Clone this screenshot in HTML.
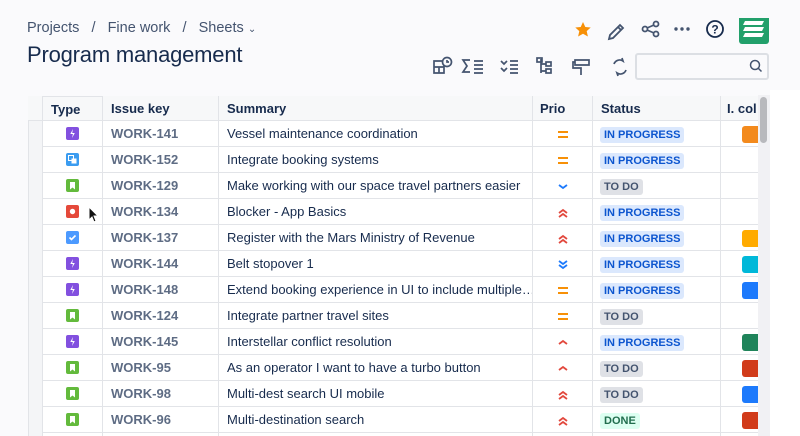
<!DOCTYPE html><html style="overflow:hidden"><head><style>
*{box-sizing:border-box;margin:0;padding:0}
html,body{width:800px;height:436px;overflow:hidden}
body{background:#fafafc;font-family:"Liberation Sans",sans-serif;position:relative;color:#172b4d}
.a{position:absolute}
.bc{left:27px;top:20px;font-size:14.5px;color:#44546f}
h1{position:absolute;left:27px;top:42px;font-size:22px;font-weight:500;color:#172b4d;letter-spacing:-0.2px}
.tbl{left:28px;top:96px;width:730px;height:340px;overflow:hidden}
.row{position:absolute;left:0;width:730px;height:26px;border-bottom:1px solid #e2e4e8;font-size:13px;display:flex;align-items:center}
.c{position:absolute;top:0;height:26px;line-height:26px;border-left:1px solid #e2e4e8;white-space:nowrap;overflow:hidden}
.hd .c{font-weight:bold;font-size:13px}
.key{color:#5e6c84;font-weight:bold;padding-left:8px}
.sum{padding-left:8px;color:#172b4d}
.lz{display:inline-block;padding:0 4px;height:16px;line-height:16px;font-size:11px;font-weight:bold;border-radius:3px;margin-left:7px;vertical-align:middle}
.ip{background:#dbe8fd;color:#0c55cf}.td{background:#dfe1e6;color:#44546f}.dn{background:#dcfff1;color:#216e4e}
.ic{display:inline-block;width:13px;height:13px;border-radius:2px;position:absolute;left:23px;top:6px}
.sw{position:absolute;left:21px;top:5px;width:22px;height:17px;border-radius:3px}
</style></head><body>
<div class="a bc">Projects &nbsp;&nbsp;/&nbsp;&nbsp; Fine work &nbsp;&nbsp;/&nbsp;&nbsp; Sheets <span style="font-size:10px">&#8964;</span></div>
<h1>Program management</h1>
<svg class="a" style="left:572px;top:18px" width="200" height="28" viewBox="0 0 200 28">
<path d="M11 4l2.3 5 5.4.5-4 3.6 1.2 5.4-4.9-2.8-4.9 2.8 1.2-5.4-4-3.6 5.4-.5z" fill="#f79007"/>
<path d="M37 21l1-4 10-10 3 3-10 10zM46 9l3 3" stroke="#44546f" stroke-width="1.8" fill="none"/>
<circle cx="84" cy="6" r="2.5" fill="none" stroke="#44546f" stroke-width="1.8"/><circle cx="73" cy="11" r="2.5" fill="none" stroke="#44546f" stroke-width="1.8"/><circle cx="84" cy="16" r="2.5" fill="none" stroke="#44546f" stroke-width="1.8"/><path d="M75 10l7-3M75 12l7 3" stroke="#44546f" stroke-width="1.6"/>
<circle cx="104" cy="11" r="1.7" fill="#44546f"/><circle cx="110" cy="11" r="1.7" fill="#44546f"/><circle cx="116" cy="11" r="1.7" fill="#44546f"/>
<circle cx="143" cy="11" r="8" fill="none" stroke="#172b4d" stroke-width="1.8"/><text x="143" y="15.5" text-anchor="middle" font-size="12" font-weight="bold" fill="#172b4d" font-family="Liberation Sans">?</text>
<rect x="167" y="-4" width="30" height="30" rx="3" fill="#22a06b"/><path d="M173 3h19l-2 4h-19zM173 9h19l-2 4h-19zM173 15h19l-2 4h-19z" fill="#fff"/>
</svg>
<svg class="a" style="left:430px;top:55px" width="200" height="24" viewBox="0 0 200 24" fill="none" stroke="#44546f" stroke-width="1.7">
<path d="M4 6h10v12H4zM4 12h10M9 12v6"/><circle cx="17" cy="7" r="4.5" fill="#fafafc"/><path d="M17 5v2h2"/>
<path d="M40 5h-7l4 6-4 6h7M44 6h9M44 10h9M44 14h9M44 18h9"/>
<path d="M71 6l3 3 3-3M71 13l3 3 3-3M80 6h8M80 10h8M80 14h8M80 18h8"/>
<path d="M111 4v14M111 9h5M111 16h5"/><rect x="107" y="3" width="5" height="4"/><rect x="116" y="7" width="5" height="4"/><rect x="116" y="14" width="5" height="4"/>
<path d="M145 5h14v5h-14zM145 7h-2v6h8v7"/>
<path d="M184 9a6 6 0 0 1 9-3l-1-3M196 15a6 6 0 0 1-9 3l1 3"/>
</svg>
<div class="a" style="left:635px;top:53px;width:134px;height:27px;border:2px solid #dcdfe4;border-radius:3px;background:#fafafc"></div>
<svg class="a" style="left:749px;top:59px" width="14" height="14"><circle cx="6" cy="6" r="4.5" fill="none" stroke="#44546f" stroke-width="1.5"/><path d="M9.5 9.5l3 3" stroke="#44546f" stroke-width="1.5"/></svg>

<div class="a tbl">
<div class="row hd" style="top:0;height:25px;background:#f7f8f9"><div class="c" style="left:14px;width:60px;padding-left:8px;border-top:1px solid #e2e4e8;height:25px">Type</div><div class="c" style="left:74px;width:116px;padding-left:8px">Issue key</div><div class="c" style="left:190px;width:314px;padding-left:8px">Summary</div><div class="c" style="left:504px;width:60px;padding-left:7px">Prio</div><div class="c" style="left:564px;width:128px;padding-left:8px">Status</div><div class="c" style="left:692px;width:40px;padding-left:6px">I. col</div></div>
</div>
<div class="a" style="left:758px;top:95px;width:12px;height:341px;background:#f1f1f4"></div>
<div class="a" style="left:760px;top:97px;width:7px;height:46px;background:#b8b9bd;border-radius:4px"></div>
<div class="a" style="left:770px;top:90px;width:30px;height:346px;background:#fff"></div>
<script>
var R=[["#8250df","b","WORK-141","Vessel maintenance coordination","=","ip","IN PROGRESS","#f38a1d"],
["#3b9cf0","s","WORK-152","Integrate booking systems","=","ip","IN PROGRESS",""],
["#63ba3c","k","WORK-129","Make working with our space travel partners easier","v","td","TO DO",""],
["#e5493a","o","WORK-134","Blocker - App Basics","^^","ip","IN PROGRESS",""],
["#4c9aff","c","WORK-137","Register with the Mars Ministry of Revenue","^^","ip","IN PROGRESS","#ffab00"],
["#8250df","b","WORK-144","Belt stopover 1","vv","ip","IN PROGRESS","#00b8d9"],
["#8250df","b","WORK-148","Extend booking experience in UI to include multiple…","=","ip","IN PROGRESS","#1d7afc"],
["#63ba3c","k","WORK-124","Integrate partner travel sites","=","td","TO DO",""],
["#8250df","b","WORK-145","Interstellar conflict resolution","^","ip","IN PROGRESS","#1f845a"],
["#63ba3c","k","WORK-95","As an operator I want to have a turbo button","^","td","TO DO","#d13b1a"],
["#63ba3c","k","WORK-98","Multi-dest search UI mobile","^^","td","TO DO","#1d7afc"],
["#63ba3c","k","WORK-96","Multi-destination search","^^","dn","DONE","#d13b1a"],
["#63ba3c","k","","","","","",""]];
var P={"=":'<path d="M4 4h10M4 9h10" stroke="#f79007" stroke-width="2"/>',"v":'<path d="M5 5l4 3 4-3" stroke="#1d7afc" stroke-width="1.8" fill="none"/>',"vv":'<path d="M5 3l4 3 4-3M5 7l4 3 4-3" stroke="#1d7afc" stroke-width="1.8" fill="none"/>',"^":'<path d="M5 8l4-3 4 3" stroke="#e2483d" stroke-width="1.8" fill="none"/>',"^^":'<path d="M5 7l4-3 4 3M5 11l4-3 4 3" stroke="#e2483d" stroke-width="1.8" fill="none"/>'};
var G={b:'<path d="M7 2L4.3 7h2.6L6 11 8.8 6H6.2z" fill="#fff"/>',s:'<rect x="2.5" y="2.5" width="5" height="5" fill="none" stroke="#fff"/><rect x="5.5" y="5.5" width="5" height="5" fill="#fff"/>',k:'<path d="M4 3h5v7.5l-2.5-2-2.5 2z" fill="#fff"/>',o:'<circle cx="6.5" cy="6.5" r="2.7" fill="#fff"/>',c:'<path d="M3.5 6.5l2 2 4-4" stroke="#fff" stroke-width="1.6" fill="none"/>'};
var h='';R.forEach(function(r,i){var t=25+26*i;h+='<div class="row" style="top:'+t+'px;background:#fff">'+
'<div class="c" style="left:0;width:14px;background:#f4f5f7;border-left:1px solid #e2e4e8"></div>'+
'<div class="c" style="left:14px;width:60px">'+(r[2]?'<svg class="ic" style="background:'+r[0]+'" width="13" height="13">'+G[r[1]]+'</svg>':'')+'</div>'+
'<div class="c key" style="left:74px;width:116px">'+r[2]+'</div>'+
'<div class="c sum" style="left:190px;width:314px">'+r[3]+'</div>'+
'<div class="c" style="left:504px;width:60px">'+(r[4]?'<svg style="position:absolute;left:21px;top:7px" width="18" height="14">'+P[r[4]]+'</svg>':'')+'</div>'+
'<div class="c" style="left:564px;width:128px">'+(r[6]?'<span class="lz '+r[5]+'">'+r[6]+'</span>':'')+'</div>'+
'<div class="c" style="left:692px;width:40px">'+(r[7]?'<div class="sw" style="background:'+r[7]+'"></div>':'')+'</div></div>';});
document.querySelector('.tbl').insertAdjacentHTML('beforeend',h);
</script>
<svg class="a" style="left:88px;top:206px" width="12" height="18"><path d="M1 1v13l3-3 2 5 2-1-2-5h4z" fill="#111" stroke="#fff" stroke-width="1"/></svg>
</body></html>
